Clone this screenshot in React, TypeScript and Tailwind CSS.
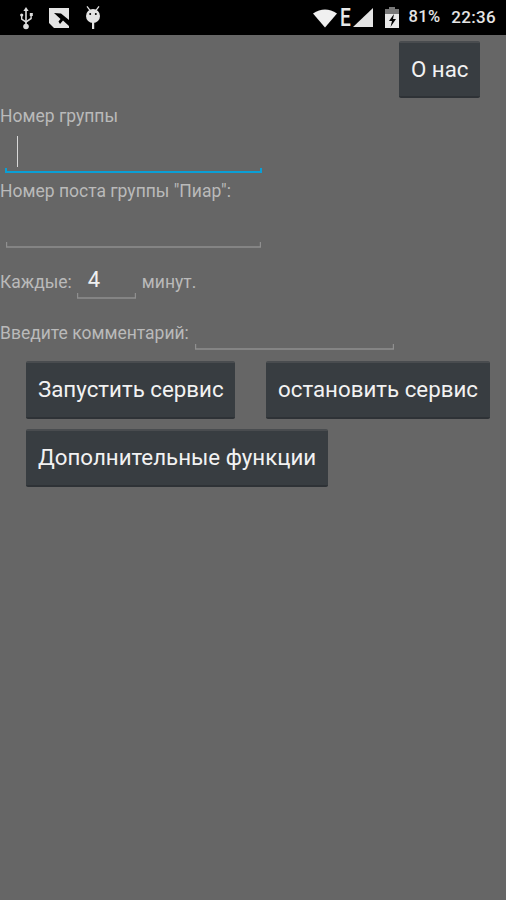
import React from "react";

function Btn({ children, className = "" }: { children: React.ReactNode; className?: string }) {
  return (
    <button className={`px-3 pb-[1px] bg-[#383d41] border-t-2 border-t-[#494c4f] border-b-2 border-b-[#2e3236] rounded-[2px] text-[#f2f2f2] text-[22.3px] leading-none whitespace-nowrap ${className}`}>
      {children}
    </button>
  );
}

function Underline({ width, color = "#8f8f8f", thick = false }: { width: number; color?: string; thick?: boolean }) {
  return (
    <svg width={width} height={6} className="block" viewBox={`0 0 ${width} 6`}>
      <path
        d={`M${thick ? 1 : 0.5} 0V${thick ? 4 : 5}H${width - (thick ? 1 : 0.5)}V0`}
        fill="none"
        stroke={color}
        strokeWidth={thick ? 2 : 1.4}
      />
    </svg>
  );
}

export default function App() {
  return (
    <div className="w-[506px] h-[900px] bg-[#666666] flex flex-col overflow-hidden font-['Roboto',sans-serif]">
      <div className="h-[35px] bg-black flex items-center shrink-0 text-[#e4e4e4]">
        <svg width="16" height="24" viewBox="0 0 16 24" className="ml-[18px]" fill="#dcdcdc">
          <circle cx="8" cy="20.500" r="2.800" />
          <rect x="7.200" y="4" width="1.600" height="16" />
          <path d="M8 1l2.600 4H5.400z" />
          <path d="M8 17l-5-3.500V10h1.400v2.800L8 15z" />
          <path d="M8 15l4.400-3V9.500h1.400V13L8 17z" />
          <circle cx="3.700" cy="9" r="1.600" />
          <rect x="11.800" y="7" width="3" height="3" />
        </svg>
        <svg width="22" height="22" viewBox="0 0 22 22" className="ml-[14px]">
          <path d="M1 1h20v20H6L1 16z" fill="#e4e4e4" />
          <path d="M6 6l7 .5 8 6.500v6l-6-5.500-3 3.500-1.500-2.500 2-2.500z" fill="#000" />
        </svg>
        <svg width="16" height="23" viewBox="0 0 16 23" className="ml-[15px]" fill="#e4e4e4">
          <circle cx="8" cy="10" r="7" />
          <rect x="7" y="15" width="2.200" height="8" />
          <path d="M2.500 0l3 4-1 .8-3-4zM13.500 0l-3 4 1 .8 3-4z" />
          <circle cx="5.200" cy="8" r="1" fill="#000" />
          <circle cx="10.800" cy="8" r="1" fill="#000" />
        </svg>
        <div className="flex-1" />
        <svg width="24" height="20" viewBox="0 0 24 20" fill="#f0f0f0">
          <path d="M0 5.500Q12-2.500 24 5.500L12 19.500z" />
        </svg>
        <span className="ml-[3px] w-[10px] text-[26.500px] font-medium leading-none text-[#e8e8e8] scale-x-[0.72] origin-left">E</span>
        <svg width="20" height="20" viewBox="0 0 20 20" className="ml-[3px]" fill="#e4e4e4">
          <path d="M0 19L20 0V19z" />
        </svg>
        <svg width="14" height="21" viewBox="0 0 14 21" className="ml-[12px]">
          <path d="M4 0h6v2.500h4V21H0V2.500h4z" fill="#e8e8e8" />
          <path d="M4 0h6v2.500h4V7H0V2.500h4z" fill="#777" />
          <path d="M9 7L4 14h3L5.500 20 11 12H8z" fill="#000" />
        </svg>
        <span className="ml-[10px] text-[16.500px] font-medium leading-none tracking-[0.3px]">81%</span>
        <span className="ml-[11px] mr-[10px] text-[17px] font-medium leading-none tracking-[0.3px]">22:36</span>
      </div>

      <div className="flex justify-end pt-[6px] pr-[26px]">
        <Btn className="w-[81px] h-[57px]">О нас</Btn>
      </div>

      <div className="mt-[7px] text-[17.500px] leading-[22px] text-[#bababa]">Номер группы</div>
      <div className="mt-[8px] pl-[5px]">
        <div className="h-[33px] pl-[12px] flex items-start pt-[1px]">
          <div className="w-[1.300px] h-[31px] bg-[#d8d8d8]" />
        </div>
        <Underline width={257} color="#0a9fd6" thick />
      </div>
      <div className="mt-[6px] text-[17.500px] leading-[22px] text-[#bababa]">Номер поста группы "Пиар":</div>
      <div className="mt-[40px] pl-[6px]">
        <Underline width={255} />
      </div>

      <div className="mt-[19px] flex items-start text-[17.500px] leading-[22px] text-[#bababa]">
        <span className="mt-[4px]">Каждые:</span>
        <div className="ml-[5px] w-[59px]">
          <div className="h-[26px] pl-[11px] text-[22px] leading-[26px] text-[#f0f0f0]">4</div>
          <Underline width={59} />
        </div>
        <span className="ml-[6px] mt-[4px]">минут.</span>
      </div>

      <div className="mt-[23px] flex items-start text-[17.500px] leading-[22px] text-[#bababa]">
        <span>Введите комментарий:</span>
        <div className="ml-[6px] w-[199px] pt-[22px]">
          <Underline width={199} />
        </div>
      </div>

      <div className="mt-[11px] pl-[26px] flex gap-[31px]">
        <Btn className="w-[209px] h-[58px]">Запустить сервис</Btn>
        <Btn className="w-[224px] h-[58px]">остановить сервис</Btn>
      </div>
      <div className="mt-[10px] pl-[26px] flex">
        <Btn className="w-[302px] h-[58px]">Дополнительные функции</Btn>
      </div>
    </div>
  );
}
